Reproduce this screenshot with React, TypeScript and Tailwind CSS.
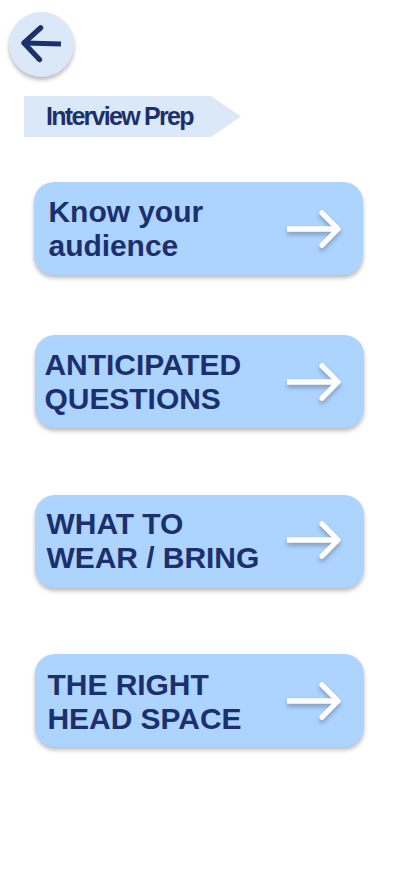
import React from "react";

type Item = { lines: [string, string]; card: string; text: string; arrow: string };

const items: Item[] = [
  { lines: ["Know your", "audience"], card: "ml-[34px] mt-[45px] shadow-[0_3px_4px_rgba(0,0,0,0.27)]", text: "pl-[14.5px] pt-[13px]", arrow: "ml-[251px] mt-[26px]" },
  { lines: ["ANTICIPATED", "QUESTIONS"], card: "ml-[35px] mt-[60px] shadow-[0_3px_4px_rgba(20,0,0,0.27)]", text: "pl-[9.5px] pt-[13px]", arrow: "ml-[250px] mt-[26px]" },
  { lines: ["WHAT TO", "WEAR / BRING"], card: "ml-[35px] mt-[67px] shadow-[0_3px_4px_rgba(20,0,0,0.27)]", text: "pl-[11.5px] pt-[12px]", arrow: "ml-[250px] mt-[24px]" },
  { lines: ["THE RIGHT", "HEAD SPACE"], card: "ml-[35px] mt-[66px] shadow-[0_3px_4px_rgba(20,0,0,0.27)]", text: "pl-[12.5px] pt-[14px]", arrow: "ml-[250px] mt-[26px]" },
];

function Card({ lines, card, text, arrow }: Item) {
  return (
    <button className={`grid h-[93px] w-[329px] items-start rounded-[20px] bg-[#add3ff] text-left ${card}`}>
      <span className={`col-start-1 row-start-1 whitespace-nowrap text-[30px] leading-[34px] font-bold tracking-[-0.050px] ${text}`}>
        {lines[0]}
        <br />
        {lines[1]}
      </span>
      <svg className={`col-start-1 row-start-1 h-[42px] w-[58px] drop-shadow-[0_3px_2px_rgba(0,0,0,0.25)] ${arrow}`} viewBox="0 0 58 42" fill="none" stroke="#fff" strokeWidth="5.300">
        <path d="M2 21H53" />
        <path d="M37 4.800L53 21L37 37.200" strokeLinecap="round" strokeLinejoin="round" />
      </svg>
    </button>
  );
}

export default function App() {
  return (
    <main className="h-[896px] w-[414px] overflow-hidden bg-white font-['Liberation_Sans',Arial,sans-serif] text-[#1b306c]">
      <button className="mt-3 ml-[9px] flex size-[65px] items-center justify-center rounded-full bg-[#dbe8f8] shadow-[0_3px_4px_rgba(0,0,0,0.27)]">
        <svg className="h-[40px] w-[44px]" viewBox="0 0 44 40" fill="none" stroke="#1b306c" strokeWidth="5.200">
          <path d="M41 19L5 18" />
          <path d="M20.700 2.800L3.900 18L19.500 34.500" strokeLinecap="round" strokeLinejoin="round" />
        </svg>
      </button>
      <h1 className="mt-[19px] ml-6 h-[41px] w-[217px] bg-[#dbe8f8] pl-[22px] text-[25px] leading-[40px] font-bold tracking-[-1.720px] whitespace-nowrap [clip-path:polygon(0_0,187px_0,100%_50%,187px_100%,0_100%)]">
        Interview Prep
      </h1>
      {items.map((item) => (
        <Card key={item.lines[0]} {...item} />
      ))}
    </main>
  );
}
